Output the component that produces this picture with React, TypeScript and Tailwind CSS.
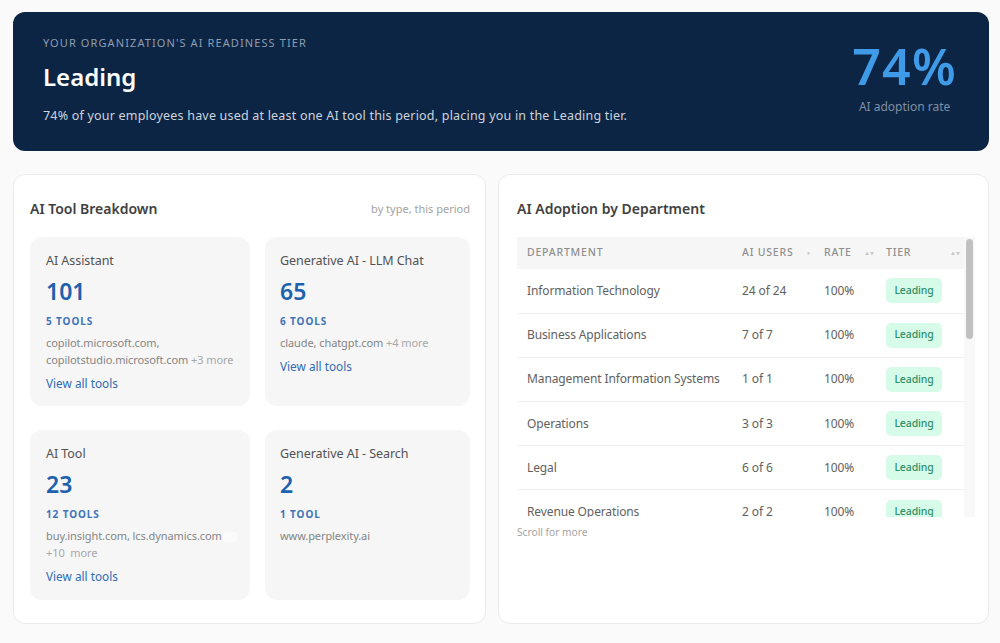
const font = { fontFamily: '"Noto Sans", sans-serif' };

type CardData = { title: string; value: string; tools: string; desc: React.ReactNode; link?: boolean };

const cards: CardData[] = [
  { title: "AI Assistant", value: "101", tools: "5 TOOLS", desc: <>copilot.microsoft.com,<br />copilotstudio.microsoft.com <span className="text-[#a8a8a8]">+3 more</span></>, link: true },
  { title: "Generative AI - LLM Chat", value: "65", tools: "6 TOOLS", desc: <>claude, chatgpt.com <span className="text-[#a8a8a8]">+4 more</span></>, link: true },
  { title: "AI Tool", value: "23", tools: "12 TOOLS", desc: <>buy.insight.com, lcs.dynamics.com<span className="ml-[1px] inline-block h-[10px] w-[14px] rounded-[4px] bg-[#fbfbfb] align-middle" /><br /><span className="text-[#a8a8a8]">+10&nbsp; more</span></>, link: true },
  { title: "Generative AI - Search", value: "2", tools: "1 TOOL", desc: <>www.perplexity.ai</> },
];

const rows = [
  ["Information Technology", "24 of 24"],
  ["Business Applications", "7 of 7"],
  ["Management Information Systems", "1 of 1"],
  ["Operations", "3 of 3"],
  ["Legal", "6 of 6"],
  ["Revenue Operations", "2 of 2"],
];

function SortMark({ single }: { single?: boolean }) {
  return (
    <svg width="9" height="5" viewBox="0 0 9 5" className="shrink-0" fill="#c9c9c9">
      {single ? (
        <path d="M2.5 1 L4.5 1 L4.5 3.5 L2.5 3.5 Z" />
      ) : (
        <>
          <path d="M2 0.5 L4 4 L0 4 Z" />
          <path d="M5 1 L9 1 L7 4.5 Z" />
        </>
      )}
    </svg>
  );
}

function ToolCard({ c }: { c: CardData }) {
  return (
    <div className="rounded-[12px] bg-[#f6f6f7] pl-[16px] pr-[8px] pt-[14px] even:pl-[15px]">
      <div className="text-[12.5px] leading-[20px] tracking-[-0.05px] text-[#525252]">{c.title}</div>
      <div className="mt-[7px] text-[23px] leading-[26px] font-semibold text-[#1c62ad]">{c.value}</div>
      <div className="mt-[10px] text-[10px] leading-[14px] font-bold tracking-[0.9px] text-[#3f74b8]">{c.tools}</div>
      <div className="mt-[6px] text-[11px] leading-[17px] tracking-[-0.08px] text-[#858585] whitespace-nowrap">{c.desc}</div>
      {c.link && <div className="mt-[7px] text-[11.8px] leading-[17px] text-[#2f6db5]">View all tools</div>}
    </div>
  );
}

export default function App() {
  return (
    <div style={font} className="h-[643px] w-[1000px] overflow-hidden bg-[#fafafa] pl-[13px] pr-[11px] pt-[12px]">
      <div className="flex h-[139px] items-center justify-between rounded-[12px] bg-[#0c2544] pl-[30px] pr-[32px]">
        <div className="pb-[4px]">
          <div className="text-[11px] leading-[16px] tracking-[1.1px] text-[#8f9db0]">YOUR ORGANIZATION'S AI READINESS TIER</div>
          <div className="mt-[11px] text-[24px] leading-[30px] font-semibold text-white">Leading</div>
          <div className="mt-[15px] text-[12.5px] leading-[18px] tracking-[0.2px] text-[#ccd3dc]">74% of your employees have used at least one AI tool this period, placing you in the Leading tier.</div>
        </div>
        <div className="flex flex-col items-center pb-[13px]">
          <div className="text-[50px] leading-[60px] font-semibold tracking-[1.3px] text-[#3f9ae8]">74%</div>
          <div className="mt-[3px] text-[12px] leading-[16px] text-[#7f8fa5]">AI adoption rate</div>
        </div>
      </div>

      <div className="mt-[23px] flex gap-[12px]">
        <div className="h-[450px] w-[473px] rounded-[12px] border border-[#ebebeb] bg-white pl-[16px] pr-[15px] pt-[24px]">
          <div className="flex items-center justify-between">
            <div className="text-[14px] leading-[20px] font-semibold text-[#404040]">AI Tool Breakdown</div>
            <div className="text-[11px] leading-[16px] text-[#a3a3a3]">by type, this period</div>
          </div>
          <div className="mt-[18px] grid grid-cols-[220px_205px] grid-rows-[169px_170px] gap-x-[15px] gap-y-[24px]">
            {cards.map((c) => (
              <ToolCard key={c.title} c={c} />
            ))}
          </div>
        </div>

        <div className="h-[450px] w-[491px] rounded-[12px] border border-[#ebebeb] bg-white pl-[18px] pr-[13px] pt-[24px]">
          <div className="text-[14px] leading-[20px] font-semibold text-[#404040]">AI Adoption by Department</div>
          <div className="mt-[18px] flex h-[280px] overflow-hidden">
            <table className="h-fit w-[447px] table-fixed border-collapse">
              <colgroup>
                <col className="w-[215px]" />
                <col className="w-[82px]" />
                <col className="w-[62px]" />
                <col className="w-[88px]" />
              </colgroup>
              <thead>
                <tr className="h-[32px] bg-[#f6f6f6] text-left text-[10.5px] tracking-[0.8px] text-[#8f8f8f]">
                  <th className="pl-[10px] font-medium">DEPARTMENT</th>
                  <th className="pl-[10px] font-medium">
                    <div className="flex items-center justify-between">AI USERS<SortMark single /></div>
                  </th>
                  <th className="pl-[10px] font-medium">
                    <div className="flex items-center justify-between pr-[2px]">RATE<SortMark /></div>
                  </th>
                  <th className="pl-[10px] font-medium">
                    <div className="flex items-center justify-between pr-[4px]">TIER<SortMark /></div>
                  </th>
                </tr>
              </thead>
              <tbody>
                {rows.map(([name, users]) => (
                  <tr key={name} className="h-[44.2px] border-b border-[#f0f0f0] text-[12px] tracking-[-0.12px] text-[#616161]">
                    <td className="pl-[10px] whitespace-nowrap">{name}</td>
                    <td className="pl-[10px]">{users}</td>
                    <td className="pl-[10px]">100%</td>
                    <td className="pl-[10px]">
                      <span className="inline-flex h-[25px] w-[56px] items-center justify-center rounded-[5px] bg-[#d6fbe8] text-[10.5px] font-medium text-[#2f8f6a]">Leading</span>
                    </td>
                  </tr>
                ))}
              </tbody>
            </table>
            <div className="w-[11px] shrink-0 bg-[#f8f8f8] py-[2px] pl-[2px] pr-[2px]">
              <div className="h-[100px] w-full rounded-full bg-[#c1c1c1]" />
            </div>
          </div>
          <div className="mt-[8px] text-[10.2px] leading-[14px] text-[#a3a3a3]">Scroll for more</div>
        </div>
      </div>
    </div>
  );
}
